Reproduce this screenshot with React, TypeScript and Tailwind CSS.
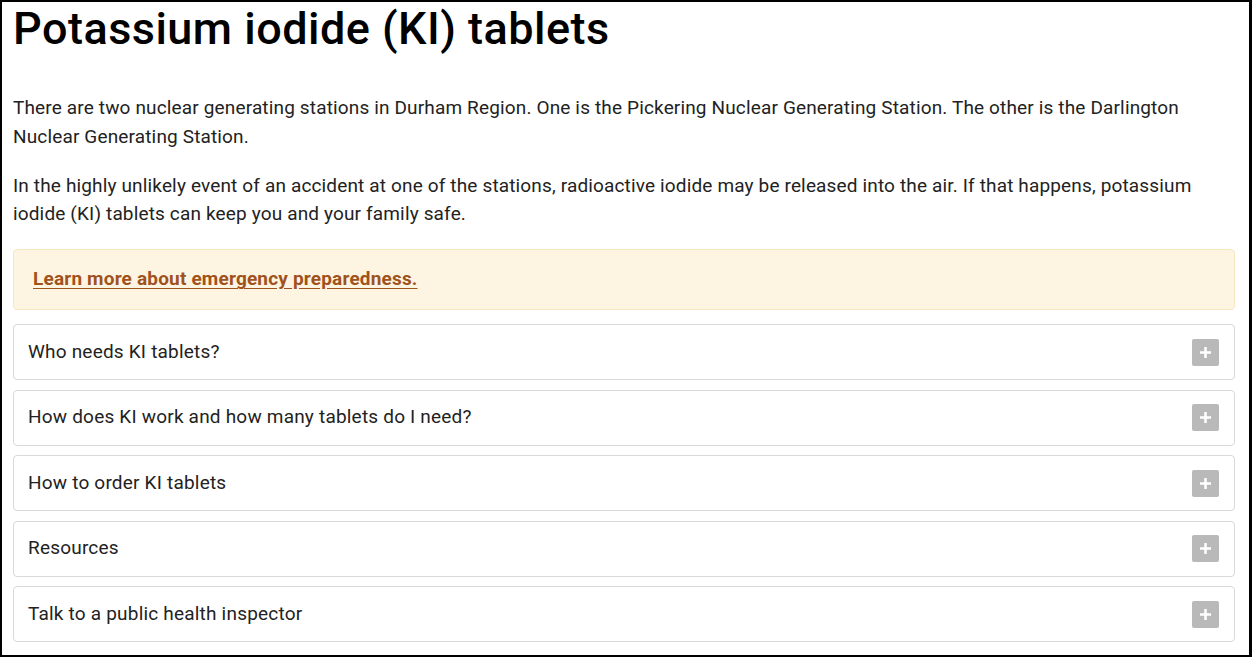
import React from "react";

const items = [
  "Who needs KI tablets?",
  "How does KI work and how many tablets do I need?",
  "How to order KI tablets",
  "Resources",
  "Talk to a public health inspector",
];

function PlusBox() {
  return (
    <div className="flex h-[27px] w-[27px] items-center justify-center rounded-[2px] bg-[#b9b9b9]">
      <svg width="13" height="13" viewBox="0 0 13 13">
        <rect x="5.25" y="1" width="2.5" height="11" fill="#fff" />
        <rect x="1" y="5.25" width="11" height="2.5" fill="#fff" />
      </svg>
    </div>
  );
}

export default function App() {
  return (
    <div
      className="box-border h-[657px] w-[1252px] overflow-hidden border-t-2 border-l-2 border-b-2 border-r-[3px] border-black bg-white pl-[11px] pr-[14px] text-[#222]"
      style={{ fontFamily: "Roboto, 'Noto Sans', sans-serif" }}
    >
      <h1 className="mt-[0px] text-[45px] font-medium leading-[54px] tracking-[0.48px] text-black">
        Potassium iodide (KI) tablets
      </h1>
      <p className="mt-[38px] text-[19px] leading-[28.8px] tracking-[0.15px]">
        There are two nuclear generating stations in Durham Region. One is the Pickering Nuclear Generating Station. The other is the Darlington Nuclear Generating Station.
      </p>
      <p className="mt-[20px] text-[19px] leading-[28.8px] tracking-[0.15px]">
        In the highly unlikely event of an accident at one of the stations, radioactive iodide may be released into the air. If that happens, potassium iodide (KI) tablets can keep you and your family safe.
      </p>
      <div className="mt-[20px] flex h-[61px] items-center rounded-[4px] border border-[#f6e7c3] bg-[#fdf5e2] pl-[19px]">
        <a
          href="#"
          className="text-[19px] font-bold leading-[28.8px] tracking-[0.18px] text-[#a0521c] underline underline-offset-[3px]"
        >
          Learn more about emergency preparedness.
        </a>
      </div>
      <div className="mt-[14px] flex flex-col gap-[9.5px]">
        {items.map((t) => (
          <div
            key={t}
            className="flex h-[56px] items-center justify-between rounded-[4px] border border-[#d9d9d9] pl-[14px] pr-[15px]"
          >
            <span className="text-[19px] leading-[28.8px] tracking-[0.2px]">{t}</span>
            <PlusBox />
          </div>
        ))}
      </div>
    </div>
  );
}
